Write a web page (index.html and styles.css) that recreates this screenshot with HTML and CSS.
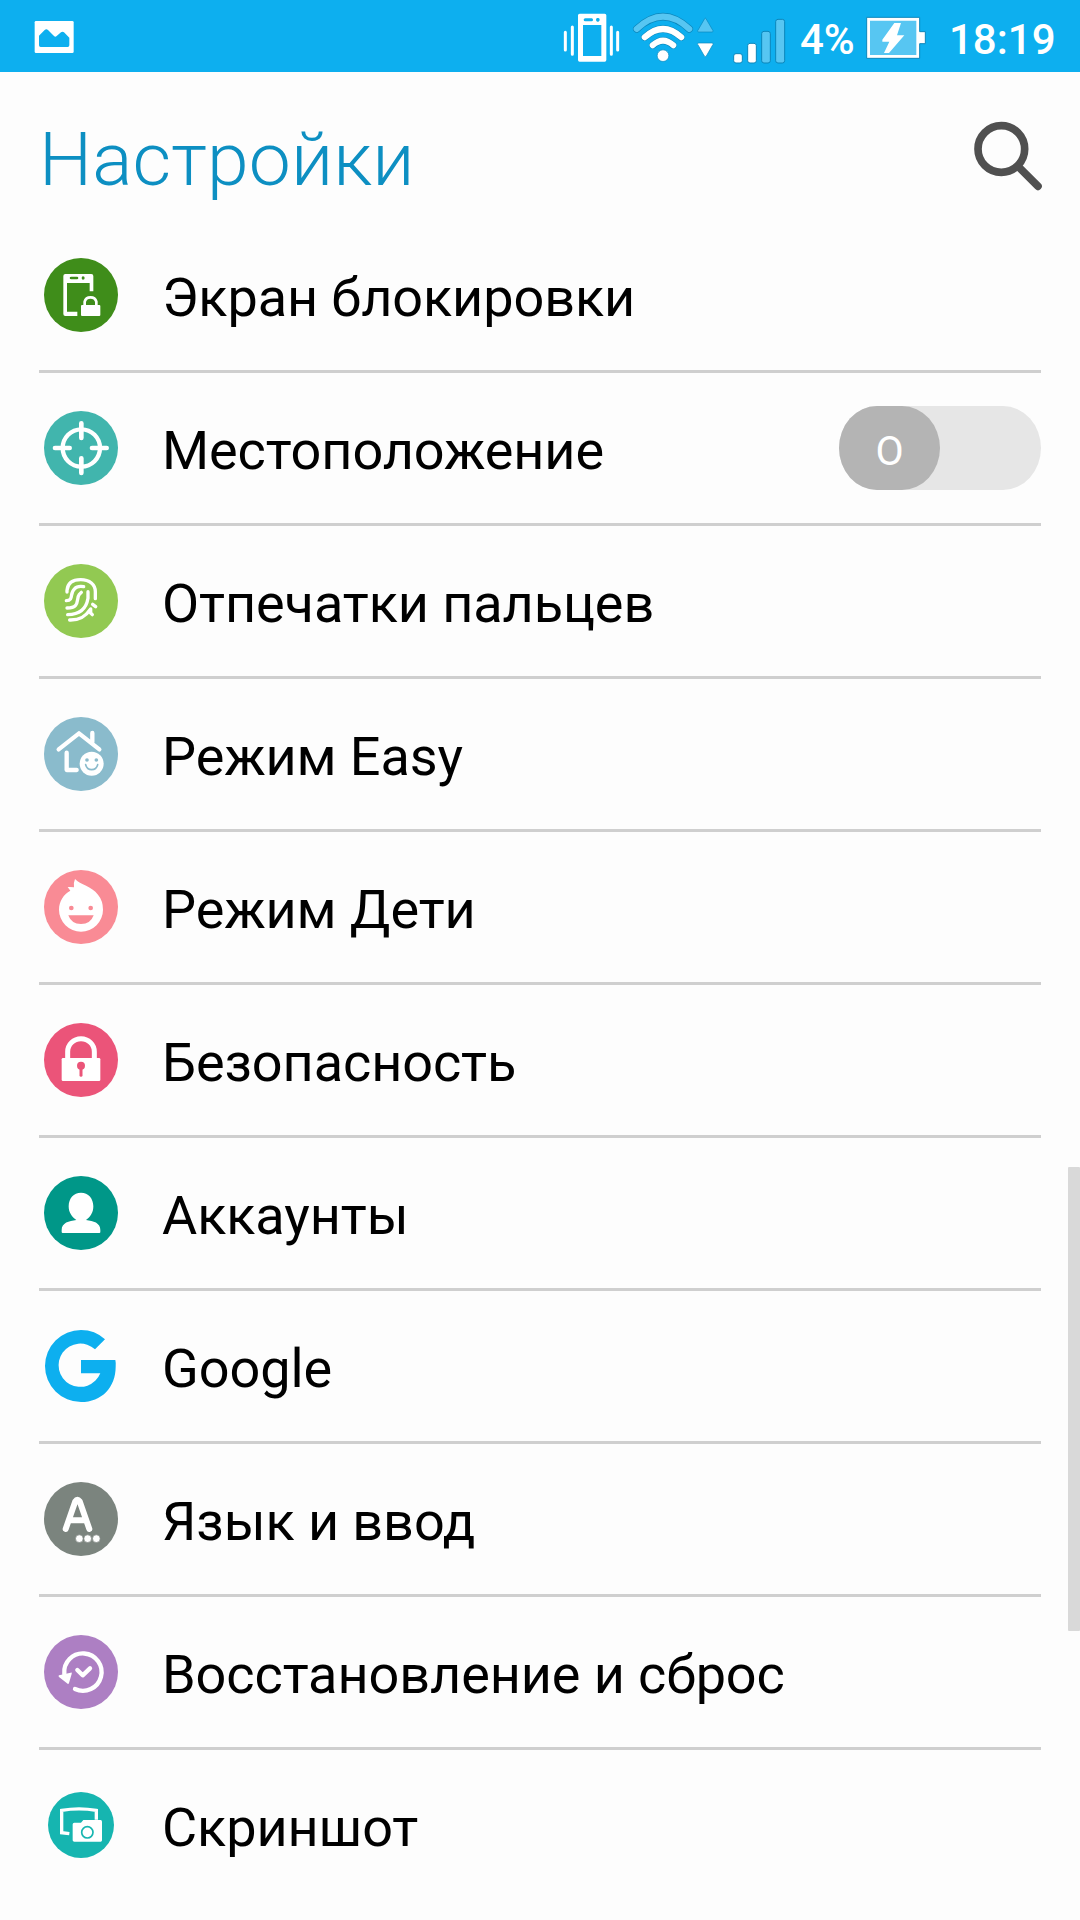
FILE: index.html
```
<!DOCTYPE html>
<html lang="ru">
<head>
<meta charset="utf-8">
<title>Настройки</title>
<link rel="stylesheet" href="styles.css">
</head>
<body>
<header class="status">
  <svg class="status-photo" width="40" height="72" viewBox="102 0 120 216"><rect x="104" y="63" width="117" height="96" rx="4" fill="#fff"/><path d="M117 107 L134 90 Q139 86 144 90 L162 108 Q166 112 170 108 L183 97 Q188 93 192 97 L208 113 V136 Q208 141 203 141 H122 Q117 141 117 136Z" fill="#0dafef"/></svg>
  <div class="status-right">
    <svg class="status-vibrate" width="57" height="72" viewBox="69 0 171 216"><g stroke="#fff" stroke-width="9" stroke-linecap="round"><path d="M76 97V150M97 81V163M214 81V163M233 97V150"/></g><path fill="#fff" fill-rule="evenodd" d="M119 41H194Q199 41 199 46V180Q199 185 194 185H119Q114 185 114 180V46Q114 41 119 41ZM129 75V168H184V75ZM136 55Q131 55 131 59.500T136 64H155Q159 64 159 59.500T155 55ZM172 54Q168 54 168 59.500T172 65H175Q179 65 179 59.500T175 54Z"/></svg>
    <svg class="status-wifi" width="62" height="72" viewBox="276 0 186 216"><g fill="none" stroke-linecap="round"><path d="M290 87Q369 13 448 87" stroke="#0b86bb" stroke-width="22"/><path d="M290 87Q369 13 448 87" stroke="#57c6f2" stroke-width="18"/><path d="M314 112Q369 62 424 112M338 136Q369 108 400 136" stroke="#0b86bb" stroke-width="21"/><path d="M314 112Q369 62 424 112M338 136Q369 108 400 136" stroke="#fff" stroke-width="18"/></g><circle cx="369" cy="167" r="17.500" fill="#fff" stroke="#0b86bb" stroke-width="2"/></svg>
    <svg class="status-data" width="18" height="72" viewBox="468 0 54 216"><path d="M494 56Q496 53 498 56L519 92Q520 96 516 96H476Q472 96 473 92Z" fill="#57c6f2" stroke="#0b86bb" stroke-width="2"/><path d="M476 129H516Q520 129 519 133L499 168Q496 171 493 168L473 133Q472 129 476 129Z" fill="#fff" stroke="#0b86bb" stroke-width="2"/></svg>
    <svg class="status-signal" width="54" height="72" viewBox="576 0 162 216"><g stroke="#0b86bb" stroke-width="3"><g fill="#fff"><rect x="581" y="161" width="26" height="28" rx="7"/><rect x="623" y="130" width="26" height="59" rx="7"/></g><g fill="#57c6f2"><rect x="665" y="94" width="26" height="95" rx="7"/><rect x="707" y="58" width="27" height="131" rx="7"/></g></g></svg>
    <span class="status-text status-charge">4%</span>
    <svg class="status-battery" width="62" height="72" viewBox="195 0 186 216"><path d="M200 52H359V95H376V131H359V175H200Z" fill="#fff" stroke="#0b86bb" stroke-width="3"/><path d="M210 62H349V165H210Z" fill="#57c6f2"/><path d="M283 69H303L291 106H313L267 159H252L268 125H247V119Z" fill="#fff"/></svg>
    <span class="status-text status-time">18:19</span>
  </div>
</header>

<div class="titlebar">
  <h1 class="title">Настройки</h1>
  <svg class="search" width="70" height="70" viewBox="519 363 210 210" fill="none" stroke="#505050"><circle cx="604" cy="447" r="70" stroke-width="23"/><path d="M656 501L714 559" stroke-width="23" stroke-linecap="round"/></svg>
</div>

<main class="list">
  <div class="row">
    <svg class="icon" viewBox="42 54 222 222"><circle cx="153" cy="165" r="111" fill="#3f8d1a"/><path fill="#fff" fill-rule="evenodd" d="M106 102H184Q190 102 190 108V154H179V129H111V215H142V228H106Q100 228 100 222V108Q100 102 106 102ZM124 110Q119 110 119 114T124 118H141Q145 118 145 114T141 110ZM159 109Q155 109 155 114T159 119Q164 119 164 114T159 109Z"/><path d="M164 198V185A18 17 0 0 1 199 185V198" fill="none" stroke="#fff" stroke-width="8"/><rect x="153" y="195" width="58" height="33" rx="3" fill="#fff"/></svg>
    <span class="label">Экран блокировки</span>
  </div>
  <div class="row">
    <svg class="icon" viewBox="42 513 222 222"><circle cx="153" cy="624" r="111" fill="#41b5ad"/><g fill="none" stroke="#fff"><circle cx="154" cy="624" r="56" stroke-width="13"/><path d="M154 550V594M154 655V699M75 624H119M186 624H230" stroke-width="14" stroke-linecap="round"/></g></svg>
    <span class="label">Местоположение</span>
    <div class="toggle"><span class="thumb">O</span></div>
  </div>
  <div class="row">
    <svg class="icon" viewBox="42 72 222 222"><circle cx="153" cy="183" r="111" fill="#92c952"/><g fill="none" stroke="#fff" stroke-width="10" stroke-linecap="round" stroke-linejoin="round"><path d="M111 156V151C113 129 129 119 152 119C179 119 196 134 196 155V176"/><path d="M109 182C133 181 117 160 134 146Q142 137 161 140"/><path d="M111 204C152 204 137 177 148 163L154 157"/><path d="M113 224C157 224 170 199 174 175V155"/><path d="M119 240C150 241 167 229 182 207V219L187 224M188 193L197 200"/></g></svg>
    <span class="label">Отпечатки пальцев</span>
  </div>
  <div class="row">
    <svg class="icon" viewBox="42 531 222 222"><circle cx="153" cy="642" r="111" fill="#8abbcc"/><g fill="none" stroke="#fff" stroke-width="13" stroke-linecap="round" stroke-linejoin="round"><path d="M86 628L147 580L208 628M187 579V607"/><path d="M110 638V690H140"/></g><circle cx="185" cy="671" r="41" fill="#8abbcc"/><circle cx="185" cy="671" r="36" fill="#fff"/><g fill="#8abbcc"><circle cx="171" cy="660" r="5.500"/><circle cx="199" cy="660" r="5.500"/></g><path d="M167 674Q171 689 185 689T203 674" fill="none" stroke="#8abbcc" stroke-width="5" stroke-linecap="round"/></svg>
    <span class="label">Режим Easy</span>
  </div>
  <div class="row">
    <svg class="icon" viewBox="42 60 222 222"><circle cx="153" cy="171" r="111" fill="#f98b95"/><path d="M135 87C151 105 185 108 204 134Q219 152 219 179A66 66 0 0 1 87 179C87 153 101 133 121 122L113 111Q122 110 132 112Q130 98 135 87Z" fill="#fff"/><g fill="#f98b95"><circle cx="124" cy="174" r="7"/><circle cx="182" cy="174" r="7"/><path d="M115 196H191Q182 222 153 222T115 196Z"/></g></svg>
    <span class="label">Режим Дети</span>
  </div>
  <div class="row">
    <svg class="icon" viewBox="42 519 222 222"><circle cx="153" cy="630" r="111" fill="#eb5479"/><path d="M113 630V605A40 39 0 0 1 193 605V630" fill="none" stroke="#fff" stroke-width="15"/><rect x="95" y="624" width="116" height="69" rx="4" fill="#fff"/><circle cx="153" cy="647" r="12" fill="#eb5479"/><path d="M153 650V676" stroke="#eb5479" stroke-width="9" stroke-linecap="round"/></svg>
    <span class="label">Безопасность</span>
  </div>
  <div class="row">
    <svg class="icon" viewBox="42 48 222 222"><circle cx="153" cy="159" r="111" fill="#009788"/><path d="M153 98C175 98 190 115 190 139C190 158 181 171 168 180C190 183 211 188 211 210V216Q211 219 208 219H98Q95 219 95 216V210C95 188 117 183 139 180C126 171 116 158 116 139C116 115 131 98 153 98Z" fill="#fff"/></svg>
    <span class="label">Аккаунты</span>
  </div>
  <div class="row">
    <svg class="icon" viewBox="42 507 222 222"><path d="M225 538L195 568A65 65 0 1 0 211 640H153V600H256Q258 608 257 620C257 682 215 726 153 726A108 108 0 0 1 153 510Q195 510 225 538Z" fill="#0dafef"/></svg>
    <span class="label">Google</span>
  </div>
  <div class="row">
    <svg class="icon" viewBox="42 66 222 222"><circle cx="153" cy="177" r="111" fill="#7b847e"/><path d="M107 207L136 124Q142 115 149 124L178 207M121 181H164" fill="none" stroke="#fff" stroke-width="18" stroke-linecap="round" stroke-linejoin="round"/><g fill="#fff" stroke="#7b847e" stroke-width="2"><circle cx="148" cy="236" r="11.500"/><circle cx="173" cy="236" r="11.500"/><circle cx="199" cy="236" r="11.500"/></g></svg>
    <span class="label">Язык и ввод</span>
  </div>
  <div class="row">
    <svg class="icon" viewBox="42 525 222 222"><circle cx="153" cy="636" r="111" fill="#ad7fc3"/><g fill="none" stroke="#fff" stroke-linecap="round" stroke-linejoin="round"><path d="M103 642A56 56 0 1 1 135 687" stroke-width="13"/><path d="M142 630L158 646L180 625" stroke-width="13"/></g><path d="M87 646L122 638Q127 637 125 642L117 669Q115 674 111 670L87 651Q84 648 87 646Z" fill="#fff"/></svg>
    <span class="label">Восстановление и сброс</span>
  </div>
  <div class="row">
    <svg class="icon" viewBox="42 84 222 222"><circle cx="153" cy="195" r="99" fill="#16b5b0"/><path d="M118 221L95 218V151Q147 142 199 151V179" fill="none" stroke="#fff" stroke-width="10"/><path d="M133 188H153L160 180H184L191 180H212Q216 180 216 185V241Q216 245 212 245H133Q128 245 128 241V193Q128 188 133 188Z" fill="#fff"/><circle cx="172" cy="217" r="17" fill="#fff" stroke="#16b5b0" stroke-width="5"/></svg>
    <span class="label">Скриншот</span>
  </div>
</main>
<div class="scrollbar"></div>
</body>
</html>
```
FILE: styles.css
```
* { box-sizing: border-box; }

body {
  margin: 0;
  width: 1080px;
  height: 1920px;
  overflow: hidden;
  position: relative;
  background: #fdfdfd;
  font-family: Roboto, "Noto Sans", sans-serif;
  color: #000;
}

svg { display: block; flex: none; }

.status {
  height: 72px;
  background: #0dafef;
  display: flex;
  justify-content: space-between;
  padding: 0 25px 0 34px;
}

.status-right { display: flex; }
.status-wifi { margin-left: 12px; }
.status-data { margin-left: 2px; }
.status-signal { margin-left: 18px; }
.status-battery { margin-left: 10px; }

.status-text {
  color: #fff;
  font-size: 42px;
  font-weight: 500;
  line-height: 80px;
  height: 72px;
  white-space: nowrap;
}
.status-charge { width: 55px; margin-left: 14px; }
.status-time { width: 106px; margin-left: 22px; }

.titlebar {
  height: 148px;
  display: flex;
  justify-content: space-between;
  padding: 0 37px 0 39px;
}

.title {
  margin: 0;
  font-size: 75px;
  font-weight: 300;
  line-height: 174px;
  height: 148px;
  letter-spacing: 0.1px;
  color: #0d8fc2;
}

.search { margin-top: 49px; }

.list { padding: 0 39px; }

.row {
  height: 153px;
  border-bottom: 3px solid #cfcfcf;
  display: flex;
  align-items: center;
  padding-left: 5px;
}

.row:last-child { border-bottom-color: transparent; }

.icon { width: 74px; height: 74px; }

.label {
  margin-left: 44px;
  padding-top: 6px;
  font-size: 54px;
  line-height: 64px;
  letter-spacing: -0.08px;
  flex: 1;
  white-space: nowrap;
}

.toggle {
  width: 202px;
  height: 84px;
  border-radius: 38px / 42px;
  background: #e6e6e6;
}

.thumb {
  display: block;
  width: 101px;
  height: 84px;
  border-radius: 38px / 42px;
  background: #b4b4b4;
  color: #fff;
  font-size: 41px;
  line-height: 90px;
  text-align: center;
}

.scrollbar {
  position: absolute;
  left: 1068px;
  top: 1167px;
  width: 12px;
  height: 464px;
  border-radius: 1px;
  background: #d9d9d9;
}
```
